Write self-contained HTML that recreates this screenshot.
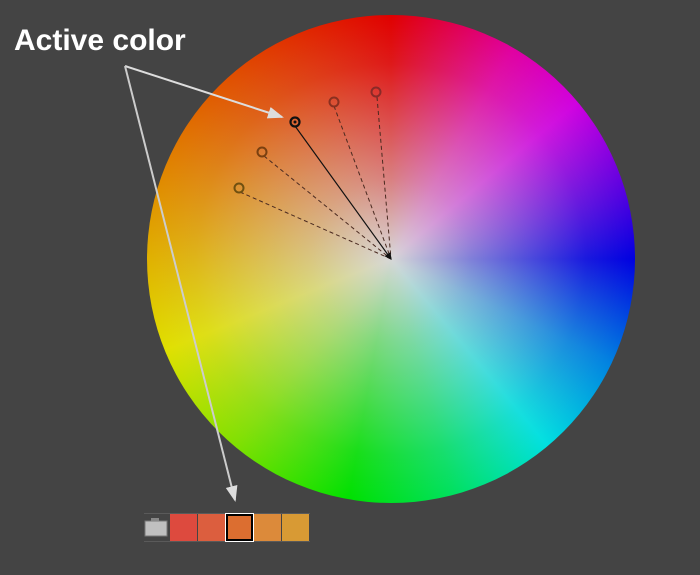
<!DOCTYPE html>
<html><head><style>
body{margin:0;width:700px;height:575px;background:#444444;position:relative;overflow:hidden;font-family:"Liberation Sans",sans-serif}
.wheel{position:absolute;left:147px;top:15px;width:488px;height:488px;border-radius:50%;
background:radial-gradient(circle closest-side,rgba(215,215,215,1) 0%,rgba(212,212,212,.6) 33%,rgba(210,210,210,.12) 80%,rgba(210,210,210,0) 100%),
conic-gradient(from 0deg,#e00000 0deg,#e000a0 30deg,#d000e0 50deg,#5000e0 75deg,#0000e0 90deg,#0080e0 115deg,#00e0e0 140deg,#00e060 165deg,#00e000 190deg,#80e000 220deg,#e0e000 248deg,#e0a000 278deg,#e06000 310deg,#e00000 360deg)}
.t{position:absolute;left:14px;top:24px;color:#fff;font-weight:bold;font-size:30px}
.sw{position:absolute;top:514px;width:27px;height:27px}
</style></head><body>
<div class="wheel"></div>
<div class="t">Active color</div>
<svg width="700" height="575" style="position:absolute;left:0;top:0">
<defs><marker id="a" markerWidth="8" markerHeight="8" refX="7" refY="4" orient="auto"><path d="M0,1 L8,4 L0,7z" fill="#ddd"/></marker>
<marker id="b" markerWidth="6" markerHeight="6" refX="5" refY="3" orient="auto"><path d="M0,0 L6,3 L0,6z" fill="#111"/></marker></defs>
<line x1="125" y1="66" x2="282" y2="117" stroke="#ddd" stroke-width="2" marker-end="url(#a)"/>
<line x1="125" y1="66" x2="235" y2="500" stroke="#ccc" stroke-width="2" marker-end="url(#a)"/>
<g stroke="#4a2a20" stroke-width="1" stroke-dasharray="4,3" fill="none">
<line x1="334" y1="106" x2="391" y2="259"/><line x1="377" y1="97" x2="391" y2="259"/>
<line x1="264" y1="156" x2="391" y2="259"/><line x1="240" y1="192" x2="391" y2="259"/></g>
<line x1="295" y1="126" x2="391" y2="259" stroke="#111" stroke-width="1.2" marker-end="url(#b)"/>
<g fill="none" stroke-width="2"><circle cx="334" cy="102" r="4.5" stroke="#8a3020"/><circle cx="376" cy="92" r="4.5" stroke="#8a2a28"/>
<circle cx="262" cy="152" r="4.5" stroke="#7a4010"/><circle cx="239" cy="188" r="4.5" stroke="#705010"/>
<circle cx="295" cy="122" r="4.5" stroke="#111" stroke-width="2.2"/></g>
<circle cx="295" cy="122" r="1.5" fill="#111"/>
<line x1="144" y1="513.5" x2="310" y2="513.5" stroke="#5a5a5a"/><line x1="144" y1="541.5" x2="310" y2="541.5" stroke="#5a5a5a"/>
<rect x="145" y="521" width="22" height="15" fill="#c0c0c0" stroke="#777"/><rect x="151" y="518" width="8" height="3" fill="#888"/>
</svg>
<div class="sw" style="left:170px;background:#dd4a3e"></div>
<div class="sw" style="left:198px;background:#dc5e3e"></div>
<div class="sw" style="left:226px;background:#dc6e30;box-sizing:border-box;border:2px solid #000;outline:1px solid #fff"></div>
<div class="sw" style="left:254px;background:#dc8a3a"></div>
<div class="sw" style="left:282px;background:#d89a34"></div>
</body></html>
